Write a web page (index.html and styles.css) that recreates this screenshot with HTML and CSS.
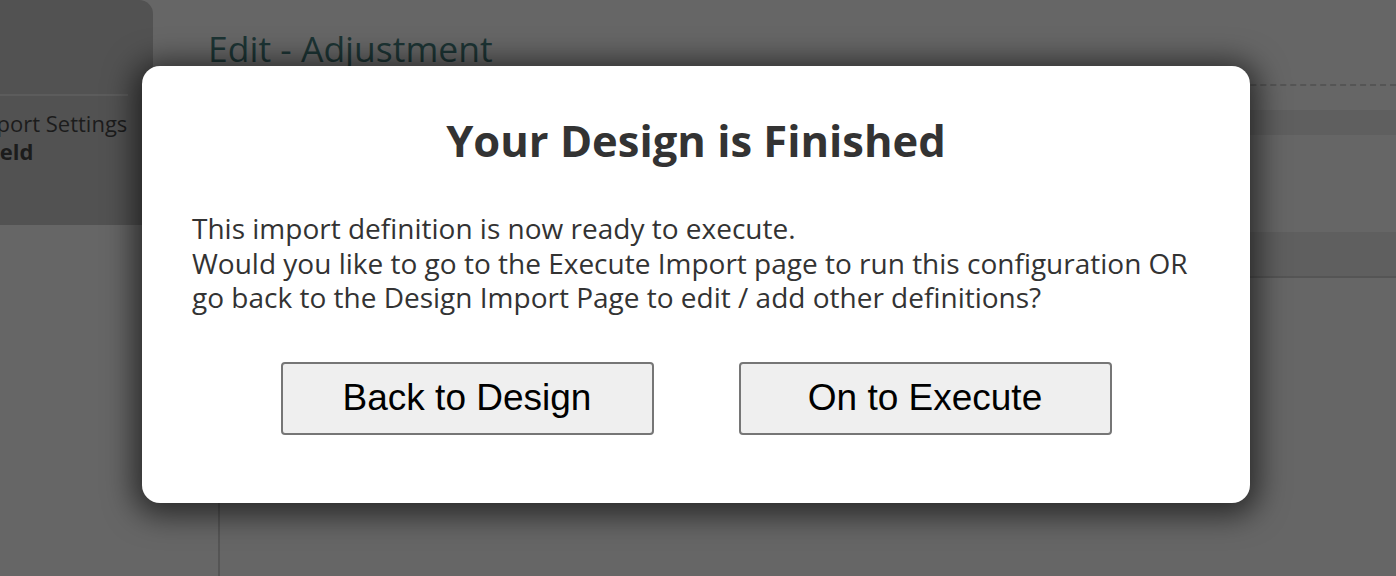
FILE: index.html
```html
<!DOCTYPE html>
<html>
<head>
<meta charset="utf-8">
<link rel="stylesheet" href="styles.css">
</head>
<body>
<div class="page">
  <aside class="sidebar">
    <div class="side-top"></div>
    <div class="side-rule"></div>
    <div class="side-text">
      <div class="side-l1">Import Settings</div>
      <div class="side-l2">Field</div>
    </div>
  </aside>
  <main class="content">
    <h1 class="page-title">Edit - Adjustment</h1>
    <div class="title-rule"></div>
    <div class="band band-a"></div>
    <div class="band band-b"></div>
    <div class="band band-c"></div>
    <div class="body-area"></div>
  </main>
</div>

<div class="overlay">
  <div class="dialog">
    <h2 class="dialog-title">Your Design is Finished</h2>
    <p class="dialog-text">This import definition is now ready to execute.<br>Would you like to go to the Execute Import page to run this configuration OR<br>go back to the Design Import Page to edit / add other definitions?</p>
    <div class="dialog-actions">
      <button class="btn">Back to Design</button>
      <button class="btn">On to Execute</button>
    </div>
  </div>
</div>
</body>
</html>
```
FILE: styles.css
```css
html, body {
  margin: 0;
  padding: 0;
  height: 100%;
}
body {
  background: #666666;
  font-family: "Open Sans", Lato, sans-serif;
  overflow: hidden;
  position: relative;
}
.page {
  display: flex;
  height: 576px;
}
.sidebar {
  width: 153px;
  flex: 0 0 153px;
  height: 225px;
  background: #525252;
  border-top-right-radius: 14px;
  overflow: hidden;
  display: flex;
  flex-direction: column;
}
.side-top {
  height: 94px;
}
.side-rule {
  height: 2px;
  width: 128px;
  background: #5c5c5c;
}
.side-text {
  padding-top: 13px;
  font-size: 22px;
  line-height: 28px;
  color: #1c1c1c;
  white-space: nowrap;
}
.side-l1 {
  margin-left: -30px;
}
.side-l2 {
  margin-left: -19px;
  font-weight: 700;
}
.content {
  flex: 1;
  display: flex;
  flex-direction: column;
  padding-left: 55px;
}
.page-title {
  margin: 27px 0 0 0;
  font-size: 35.5px;
  line-height: 42px;
  font-weight: 400;
  color: #1c3434;
  height: 57px;
}
.title-rule {
  margin-left: -55px;
  border-top: 2px dashed #555555;
  height: 0;
}
.band {
  margin-left: -55px;
}
.band-a {
  margin-top: 24px;
  height: 25px;
  background: #5f5f5f;
}
.band-b {
  height: 97px;
}
.band-c {
  height: 44px;
  background: #5f5f5f;
  border-bottom: 2px solid #555555;
}
.body-area {
  flex: 1;
  margin-left: 10px;
  border-left: 2px solid #555555;
}

.overlay {
  position: absolute;
  inset: 0;
}
.dialog {
  position: absolute;
  left: 142px;
  top: 66px;
  width: 1108px;
  height: 437px;
  box-sizing: border-box;
  background: #ffffff;
  border-radius: 18px;
  box-shadow: 0 4px 30px 8px rgba(0, 0, 0, 0.6);
  padding: 0 50px;
  display: flex;
  flex-direction: column;
}
.dialog-title {
  margin: 47px 0 0 0;
  text-align: center;
  font-size: 43.5px;
  line-height: 56px;
  font-weight: 700;
  color: #333333;
}
.dialog-text {
  margin: 42px 0 0 0;
  font-size: 28px;
  line-height: 34.5px;
  color: #333333;
}
.dialog-actions {
  margin-top: 47px;
  display: flex;
  justify-content: center;
  gap: 85px;
}
.btn {
  width: 373px;
  height: 73px;
  box-sizing: border-box;
  background: #efefef;
  border: 2px solid #767676;
  border-radius: 4px;
  font-family: "Liberation Sans", Arial, sans-serif;
  font-size: 37px;
  color: #000000;
  padding: 0;
}
```
